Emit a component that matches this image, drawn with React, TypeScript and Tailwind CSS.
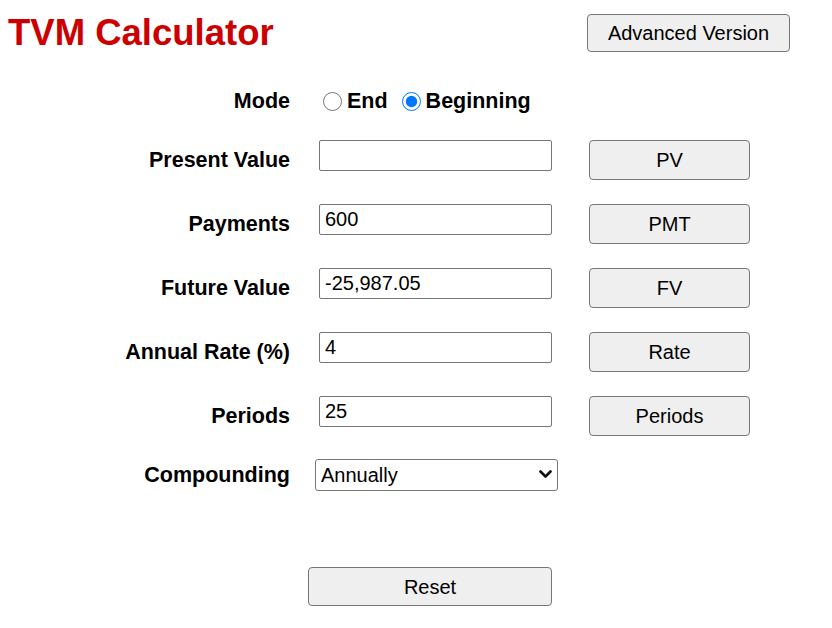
import React, { useState } from "react";

const font = { fontFamily: '"Liberation Sans", Arial, sans-serif' };

function Row({ label, value, btn }: { label: string; value: string; btn: string }) {
  return (
    <div className="flex items-start h-[40px]">
      <div className="w-[290px] h-[40px] flex items-center justify-end text-[21.5px] font-bold text-black">{label}</div>
      <input
        defaultValue={value}
        className="ml-[29px] w-[233px] h-[31px] border border-[#767676] rounded-[2px] px-[5px] text-[20px] text-black bg-white outline-none"
      />
      <button className="ml-[37px] w-[161px] h-[40px] border border-[#767676] rounded-[4px] bg-[#efefef] text-[20px] text-black">
        {btn}
      </button>
    </div>
  );
}

export default function App() {
  const [mode, setMode] = useState("begin");
  return (
    <div className="w-[832px] h-[628px] bg-white overflow-hidden" style={font}>
      <div className="flex justify-between items-start pl-[8px] pr-[42px]">
        <h1 className="mt-[13px] text-[36.5px] leading-[40px] font-bold text-[#cc0000]">TVM Calculator</h1>
        <button className="mt-[14px] w-[203px] h-[38px] border border-[#767676] rounded-[4px] bg-[#efefef] text-[20px] text-black">
          Advanced Version
        </button>
      </div>

      <div className="mt-[28px] flex items-center h-[40px]">
        <div className="w-[290px] text-right text-[21.5px] font-bold text-black">Mode</div>
        <div className="ml-[29px] flex items-center text-[21.5px] font-bold text-black">
          <label className="flex items-center">
            <input
              type="radio"
              name="mode"
              checked={mode === "end"}
              onChange={() => setMode("end")}
              className="ml-[4px] m-0 w-[19px] h-[19px]"
            />
            <span className="ml-[5px]">End</span>
          </label>
          <label className="flex items-center ml-[14px]">
            <input
              type="radio"
              name="mode"
              checked={mode === "begin"}
              onChange={() => setMode("begin")}
              className="m-0 w-[19px] h-[19px]"
            />
            <span className="ml-[5px]">Beginning</span>
          </label>
        </div>
      </div>

      <div className="mt-[19px] flex flex-col gap-[24px]">
        <Row label="Present Value" value="" btn="PV" />
        <Row label="Payments" value="600" btn="PMT" />
        <Row label="Future Value" value="-25,987.05" btn="FV" />
        <Row label="Annual Rate (%)" value="4" btn="Rate" />
        <Row label="Periods" value="25" btn="Periods" />
        <div className="flex items-center h-[32px] -mt-[1px]">
          <div className="w-[290px] text-right text-[21.5px] font-bold text-black">Compounding</div>
          <div className="ml-[25px] relative w-[243px] h-[32px]">
            <select
              defaultValue="Annually"
              className="appearance-none w-full h-full border border-[#767676] rounded-[3px] bg-white pl-[5px] text-[20px] text-black outline-none"
            >
              <option>Annually</option>
              <option>Semi-Annually</option>
              <option>Quarterly</option>
              <option>Monthly</option>
            </select>
            <svg
              className="absolute right-[6px] top-[11px] pointer-events-none"
              width="13"
              height="9"
              viewBox="0 0 13 9"
            >
              <path d="M1.5 1.5 L6.5 6.5 L11.5 1.5" fill="none" stroke="#111" strokeWidth="2.6" strokeLinecap="round" strokeLinejoin="round" />
            </svg>
          </div>
        </div>
      </div>

      <div className="mt-[76px] pl-[308px]">
        <button className="w-[244px] h-[39px] border border-[#767676] rounded-[4px] bg-[#efefef] text-[20px] text-black">
          Reset
        </button>
      </div>
    </div>
  );
}
